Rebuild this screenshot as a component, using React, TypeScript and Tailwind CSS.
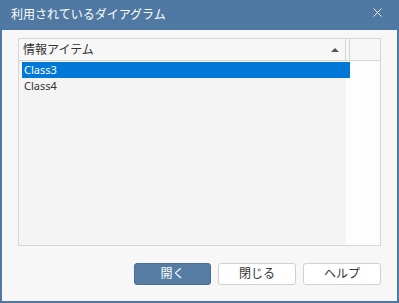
import { X } from "lucide-react";

const font = { fontFamily: '"Noto Sans", "Noto Sans CJK JP", sans-serif' };

const rows = ["Class3", "Class4"];

const App = () => {
  return (
    <div className="w-[399px] h-[303px] bg-[#4f79a3] p-[2px] pt-0 flex flex-col" style={font}>
      {/* title bar */}
      <div className="h-[30px] flex items-center justify-between pl-[9px] pr-[12px] text-white">
        <span className="text-[12px] leading-none">利用されているダイアグラム</span>
        <X size={15} strokeWidth={1.5} className="text-white/90 -mt-[6px]" />
      </div>
      <div className="flex-1 bg-[#f7f7f7] flex flex-col px-4 pt-[8px]">
        {/* list */}
        <div className="h-[208px] border border-[#d6d6d6] bg-[#fdfdfd] flex flex-col">
          <div className="h-[22px] flex border-b border-[#d6d6d6] bg-[#f7f7f7]">
            <div className="w-[327px] flex items-center justify-between pl-[4px] pr-[6px] border-r border-[#d6d6d6] text-[12px] text-[#333]">
              <span>情報アイテム</span>
              <span className="w-0 h-0 border-l-[4px] border-r-[4px] border-b-[4px] border-l-transparent border-r-transparent border-b-[#555]" />
            </div>
            <div className="w-[4px] border-r border-[#d6d6d6]" />
            <div className="flex-1" />
          </div>
          <div className="flex-1 flex">
            <div className="w-[327px] bg-[#f4f4f4] pt-[1px] pl-[3px]">
              {rows.map((r, i) => (
                <div
                  key={r}
                  className={
                    i === 0
                      ? "w-[328px] h-[16px] flex items-center pl-[2px] text-[11px] bg-[#0078d7] text-white"
                      : "w-[328px] h-[16px] flex items-center pl-[2px] text-[11px] text-[#333]"
                  }
                >
                  {r}
                </div>
              ))}
            </div>
            <div className="flex-1" />
          </div>
        </div>
        {/* buttons */}
        <div className="flex justify-end gap-[7px] mt-[17px]">
          <button className="w-[77px] h-[22px] rounded-[3px] bg-[#567ca4] border border-[#4b6f96] text-white text-[12px]">開く</button>
          <button className="w-[78px] h-[22px] rounded-[3px] bg-white border border-[#d0d0d0] text-[#333] text-[12px]">閉じる</button>
          <button className="w-[78px] h-[22px] rounded-[3px] bg-white border border-[#d0d0d0] text-[#333] text-[12px]">ヘルプ</button>
        </div>
      </div>
    </div>
  );
};

export default App;
